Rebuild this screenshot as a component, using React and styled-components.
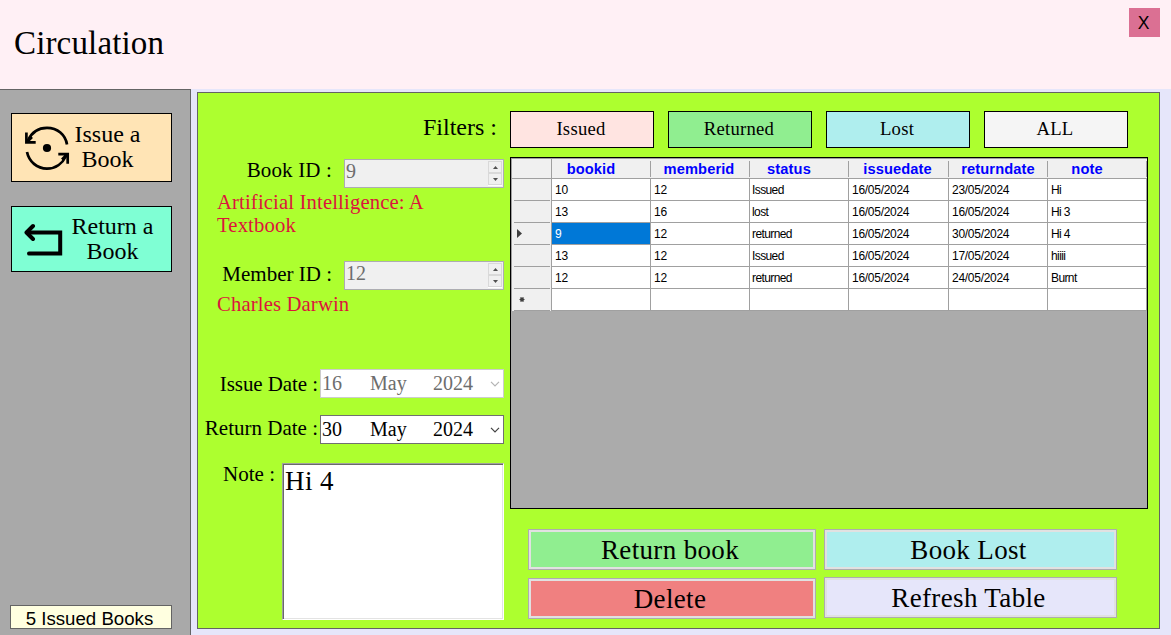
import React from "react";
import styled, { createGlobalStyle } from "styled-components";

const Global = createGlobalStyle`
  * { box-sizing: border-box; }
  body { margin: 0; background: #e6e6fa; overflow: hidden; }
  button, textarea { margin: 0; border-radius: 0; color: #000; }
`;

const serif = `"Liberation Serif", "Times New Roman", serif`;
const sans = `"Liberation Sans", Arial, sans-serif`;

const Window = styled.div`
  width: 1171px;
  height: 635px;
  display: flex;
  flex-direction: column;
  background: #e6e6fa;
  font-family: ${serif};
  color: #000;
`;

const Header = styled.header`
  height: 89px;
  flex: none;
  display: flex;
  justify-content: space-between;
  align-items: flex-start;
  padding: 8px 11px 0 14px;
  background: #fff0f5;
`;

const Title = styled.h1`
  margin: 15px 0 0;
  font-size: 33px;
  line-height: 40px;
  font-weight: 400;
  letter-spacing: 0.15px;
`;

const CloseButton = styled.button`
  width: 31px;
  height: 29px;
  border: 0;
  padding: 0 2px 0 0;
  background: #db7093;
  font: 17.5px/28px ${sans};
`;

const Body = styled.div`
  flex: 1;
  display: flex;
  align-items: flex-start;
`;

const Sidebar = styled.nav`
  width: 191px;
  height: 546px;
  display: flex;
  flex-direction: column;
  padding: 23px 0 6px 11px;
  background: #a9a9a9;
  border: solid #646464;
  border-width: 1px 1px 0 0;
`;

const NavButton = styled.button`
  width: 161px;
  height: ${(p) => p.$height}px;
  display: flex;
  align-items: flex-start;
  flex: none;
  margin-bottom: 24px;
  padding: 0 0 0 12px;
  border: 1px solid #000;
  background: ${(p) => p.$bg};
  font: 24px/25px ${serif};
`;

const NavIcon = styled.svg`
  width: 46px;
  height: 46px;
  flex: none;
  margin-top: ${(p) => p.$top}px;
`;

const NavText = styled.span`
  width: ${(p) => p.$width}px;
  margin-top: ${(p) => p.$top}px;
  text-align: center;
`;

const IssuedCount = styled.div`
  width: 162px;
  height: 24px;
  margin: auto 0 0 -1px;
  border: 1px solid #646464;
  background: #ffffe0;
  font: 18.67px/26px ${sans};
  text-align: center;
  padding-right: 3px;
  white-space: nowrap;
`;

const Panel = styled.main`
  width: 963px;
  height: 537px;
  margin: 3px 0 0 6px;
  display: flex;
  border: 1px solid #646464;
  background: #adff2f;
`;

const Form = styled.section`
  width: 312px;
  display: flex;
  flex-direction: column;
  padding: 18px 6px 0 0;
`;

const FormRow = styled.div`
  height: ${(p) => p.$height}px;
  flex: none;
  display: flex;
  justify-content: flex-end;
  align-items: flex-start;
  gap: ${(p) => p.$gap || 0}px;
  margin-bottom: ${(p) => p.$after || 0}px;
`;

const Label = styled.label`
  font-size: ${(p) => p.$size || 21}px;
  line-height: 24px;
  margin-top: ${(p) => p.$top}px;
  letter-spacing: ${(p) => p.$spacing || 0}px;
  white-space: nowrap;
`;

const FiltersLabel = styled(Label)`
  margin-right: 7px;
`;

const Detail = styled.p`
  flex: none;
  height: ${(p) => p.$height}px;
  width: 240px;
  margin: 3px 0 ${(p) => p.$after}px 19px;
  font-size: 20.67px;
  line-height: 23px;
  letter-spacing: 0.15px;
  color: #dc143c;
`;

const SpinField = styled.div`
  width: 160px;
  height: 29px;
  display: flex;
  justify-content: space-between;
  border: 1px solid #adadb2;
  background: #f0f0f0;
  color: #6d6d6d;
  padding: 0 1px 0 1px;
  font-size: 20px;
  line-height: 23px;
`;

const Spinner = styled.span`
  width: 14px;
  height: 26px;
  display: flex;
  flex-direction: column;
  padding-top: 1px;
  border-bottom: 1px solid #fff;
`;

const SpinButton = styled.span`
  height: 12px;
  display: flex;
  align-items: center;
  justify-content: center;
  border: 1px solid #d9d9d9;
  background: #f0f0f0;

  svg { width: 5px; height: 3px; display: block; }
`;

const DateField = styled.div`
  width: 184px;
  height: 29px;
  display: grid;
  grid-template-columns: 48px 63px 57px 10px;
  padding-left: 1px;
  border: 1px solid ${(p) => (p.$disabled ? "#cccccc" : "#707070")};
  background: #fff;
  color: ${(p) => (p.$disabled ? "#6d6d6d" : "#000")};
  font-size: 20px;
  line-height: 27px;

  svg {
    width: 10px;
    height: 6px;
    margin-top: 11px;
    fill: none;
    stroke: ${(p) => (p.$disabled ? "#b4b4b4" : "#444")};
  }
`;

const NoteBox = styled.textarea`
  width: 222px;
  height: 157px;
  resize: none;
  outline: 0;
  border: 1px solid;
  border-color: #a0a0a0 #fff #fff #a0a0a0;
  box-shadow: inset 1px 1px 0 #696969, inset -1px -1px 0 #e3e3e3;
  padding: 2px 2px 1px;
  background: #fff;
  font: 27px/30px ${serif};
  letter-spacing: 0.4px;
`;

const Content = styled.section`
  width: 638px;
  padding-top: 18px;
`;

const Filters = styled.div`
  display: flex;
  gap: 14px;
  margin-bottom: 9px;
`;

const FilterButton = styled.button`
  width: 144px;
  height: 37px;
  border: 1px solid #000;
  padding: 0 2px 2px 0;
  background: ${(p) => p.$bg};
  font: 18.67px/33px ${serif};
  letter-spacing: 0.25px;
`;

const GridBox = styled.div`
  width: 638px;
  height: 352px;
  border: 1px solid #000;
  background: #ababab;
`;

const DataRow = styled.div`
  display: grid;
  grid-template-columns: 41px 99px 99px 99px 100px 99px 99px;
  grid-template-rows: 22px;
  height: 22px;
  font: 12px/22px ${sans};
`;

const HeadRow = styled(DataRow)`
  height: 21px;
  grid-template-rows: 19px;
  border: solid #a0a0a0;
  border-width: 1px 0;
  background: #f0f0f0;
  font: bold 14.67px/20px ${sans};
  letter-spacing: 0.1px;
  color: #0000ff;
`;

const HeadCell = styled.span`
  height: 16px;
  margin-top: 2px;
  line-height: 16px;
  text-align: center;
  padding-right: ${(p) => p.$inset}px;
  border-right: 1px solid #a0a0a0;
`;

const HeadCorner = styled.span`
  border: solid #a0a0a0;
  border-width: 0 1px;
`;

const Marker = styled.span`
  display: flex;
  align-items: center;
  padding: 0 1px 0 2px;
  border: solid #a0a0a0;
  border-width: 0 1px;
  background: #f0f0f0;
`;

const MarkerFace = styled.span`
  height: 22px;
  flex: 1;
  border-bottom: 1px solid #a0a0a0;

  svg { display: block; width: 12px; height: 21px; }
`;

const Cell = styled.span`
  padding-left: ${(p) => (p.$shift ? 2 : 3)}px;
  border: solid #a0a0a0;
  border-width: 0 1px 1px 0;
  letter-spacing: ${(p) => (p.$text ? -0.6 : -0.28)}px;
  white-space: nowrap;
  background: ${(p) => (p.$selected ? "#0078d7" : "#fff")};
  color: ${(p) => (p.$selected ? "#fff" : "#000")};
`;

const Actions = styled.div`
  display: flex;
  gap: 8px;
  padding: 20px 0 0 18px;
`;

const ActionColumn = styled.div`
  width: ${(p) => p.$width}px;
  display: flex;
  flex-direction: column;
  gap: ${(p) => p.$gap}px;
`;

const ActionButton = styled.button`
  height: 41px;
  padding: 0 4px 0 0;
  border: 1px solid #adadad;
  box-shadow: inset 0 0 0 2px #e1e1e1;
  background: ${(p) => p.$bg};
  font: 27px/38px ${serif};
  letter-spacing: 0.35px;
`;

const columns = [
  ["bookid", 20],
  ["memberid", 2],
  ["status", 20],
  ["issuedate", 2],
  ["returndate", 0],
  ["note", 20],
];

const records = [
  ["10", "12", "Issued", "16/05/2024", "23/05/2024", "Hi"],
  ["13", "16", "lost", "16/05/2024", "16/05/2024", "Hi 3"],
  ["9", "12", "returned", "16/05/2024", "30/05/2024", "Hi 4"],
  ["13", "12", "Issued", "16/05/2024", "17/05/2024", "hiiii"],
  ["12", "12", "returned", "16/05/2024", "24/05/2024", "Burnt"],
  ["", "", "", "", "", ""],
];

const currentRow = 2;

function IssueIcon() {
  return (
    <NavIcon $top={11} viewBox="0 0 46 46" fill="none" stroke="#000" strokeWidth="2.7">
      <path d="M4 15.5C7.5 7.5 14.5 2.8 23 2.8C33.5 2.8 41.5 10 43 19.5" />
      <path d="M3 27C5 36.5 13 43.6 23 43.6C31.5 43.6 38.5 38.5 42 31" />
      <path d="M2.4 7.5V17.3H11.7M3 17L8 12" />
      <path d="M34.3 29.2H43.7V38.8M43 29.5L38 34.5" />
      <circle cx="23" cy="23" r="4.1" fill="#000" stroke="none" />
    </NavIcon>
  );
}

function ReturnIcon() {
  return (
    <NavIcon $top={10} viewBox="0 0 46 46" fill="none" stroke="#000" strokeWidth="4" strokeLinecap="round">
      <path d="M5 36.5H36.2V15.5H3" />
      <path d="M9 9L2.5 15.5L9 22" strokeLinejoin="round" />
    </NavIcon>
  );
}

function NumberField({ value }) {
  return (
    <SpinField>
      {value}
      <Spinner>
        <SpinButton>
          <svg viewBox="0 0 5 3"><path d="M0 3L2.5 0L5 3Z" fill="#505050" /></svg>
        </SpinButton>
        <SpinButton>
          <svg viewBox="0 0 5 3"><path d="M0 0L2.5 3L5 0Z" fill="#505050" /></svg>
        </SpinButton>
      </Spinner>
    </SpinField>
  );
}

function DatePicker({ day, month, year, disabled }) {
  return (
    <DateField $disabled={disabled}>
      <span>{day}</span>
      <span>{month}</span>
      <span>{year}</span>
      <svg viewBox="0 0 10 6"><path d="M1 .8L5 4.8L9 .8" strokeWidth="1.2" /></svg>
    </DateField>
  );
}

function RowMarker({ index }) {
  return (
    <Marker>
      <MarkerFace>
        {index === currentRow && (
          <svg viewBox="0 0 12 21"><path d="M3 6V15L8 10.5Z" fill="#404040" /></svg>
        )}
        {index === records.length - 1 && (
          <svg viewBox="0 0 12 21">
            <path d="M8 8V13M5.5 10.5H10.5M6.2 8.7L9.8 12.3M9.8 8.7L6.2 12.3" stroke="#404040" strokeWidth="1.1" />
          </svg>
        )}
      </MarkerFace>
    </Marker>
  );
}

function RecordsTable() {
  return (
    <GridBox>
      <HeadRow>
        <HeadCorner />
        {columns.map(([name, inset]) => (
          <HeadCell key={name} $inset={inset}>{name}</HeadCell>
        ))}
      </HeadRow>
      {records.map((record, r) => (
        <DataRow key={r}>
          <RowMarker index={r} />
          {record.map((value, c) => (
            <Cell
              key={c}
              $text={c === 2 || c === 5}
              $shift={c === 2}
              $selected={r === currentRow && c === 0}
            >
              {value}
            </Cell>
          ))}
        </DataRow>
      ))}
    </GridBox>
  );
}

export default function App() {
  return (
    <Window>
      <Global />
      <Header>
        <Title>Circulation</Title>
        <CloseButton>X</CloseButton>
      </Header>
      <Body>
        <Sidebar>
          <NavButton $height={69} $bg="#ffe4b5">
            <IssueIcon />
            <NavText $width={75} $top={8}>Issue a<br />Book</NavText>
          </NavButton>
          <NavButton $height={66} $bg="#7fffd4">
            <ReturnIcon />
            <NavText $width={85} $top={7}>Return a<br />Book</NavText>
          </NavButton>
          <IssuedCount>5 Issued Books</IssuedCount>
        </Sidebar>
        <Panel>
          <Form>
            <FormRow $height={37} $after={11}>
              <FiltersLabel as="span" $size={24} $top={4}>Filters :</FiltersLabel>
            </FormRow>
            <FormRow $height={29} $gap={12}>
              <Label $top={-1} $spacing={0.15}>Book ID :</Label>
              <NumberField value="9" />
            </FormRow>
            <Detail $height={46} $after={24}>Artificial Intelligence: A Textbook</Detail>
            <FormRow $height={29} $gap={12}>
              <Label $top={1}>Member ID :</Label>
              <NumberField value="12" />
            </FormRow>
            <Detail $height={23} $after={53}>Charles Darwin</Detail>
            <FormRow $height={29} $gap={2} $after={17}>
              <Label $top={3} $spacing={-0.08}>Issue Date :</Label>
              <DatePicker day="16" month="May" year="2024" disabled />
            </FormRow>
            <FormRow $height={29} $gap={2} $after={19}>
              <Label $top={1}>Return Date :</Label>
              <DatePicker day="30" month="May" year="2024" />
            </FormRow>
            <FormRow $height={157} $gap={7}>
              <Label $top={-1}>Note :</Label>
              <NoteBox defaultValue="Hi 4" spellCheck={false} />
            </FormRow>
          </Form>
          <Content>
            <Filters>
              <FilterButton $bg="#ffe4e1">Issued</FilterButton>
              <FilterButton $bg="#90ee90">Returned</FilterButton>
              <FilterButton $bg="#afeeee">Lost</FilterButton>
              <FilterButton $bg="#f5f5f5">ALL</FilterButton>
            </Filters>
            <RecordsTable />
            <Actions>
              <ActionColumn $width={288} $gap={8}>
                <ActionButton $bg="#90ee90">Return book</ActionButton>
                <ActionButton $bg="#f08080">Delete</ActionButton>
              </ActionColumn>
              <ActionColumn $width={293} $gap={7}>
                <ActionButton $bg="#afeeee">Book Lost</ActionButton>
                <ActionButton $bg="#e6e6fa">Refresh Table</ActionButton>
              </ActionColumn>
            </Actions>
          </Content>
        </Panel>
      </Body>
    </Window>
  );
}
